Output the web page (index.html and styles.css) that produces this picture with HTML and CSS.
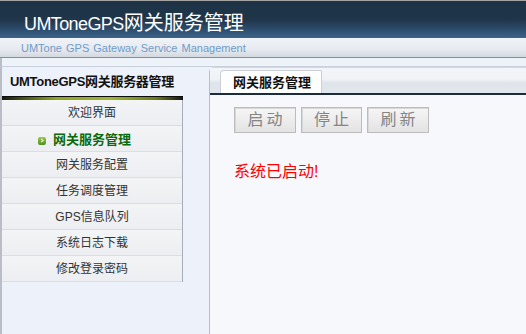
FILE: index.html
```html
<!doctype html>
<html lang="zh">
    <head>
        <meta charset="utf-8">
        <title>UMToneGPS网关服务管理</title>
        <link rel="stylesheet" href="styles.css">
    </head>
    <body>

        <div class="header">
            <div class="header-title"><span class="header-en">UMToneGPS</span>网关服务管理</div>
        </div>
        <div class="subbar">UMTone GPS Gateway Service Management</div>
        <div class="strip"></div>

        <div class="main">

            <div class="side">
                <div class="side-title">UMToneGPS网关服务器管理</div>
                <div class="side-bar"></div>
                <ul class="menu">
                    <li class="menu-item">欢迎界面</li>
                    <li class="menu-item menu-item-active"><span class="menu-icon"></span>网关服务管理</li>
                    <li class="menu-item">网关服务配置</li>
                    <li class="menu-item">任务调度管理</li>
                    <li class="menu-item">GPS信息队列</li>
                    <li class="menu-item">系统日志下载</li>
                    <li class="menu-item">修改登录密码</li>
                </ul>
            </div>

            <div class="panel">
                <div class="tabs">
                    <div class="tab">网关服务管理</div>
                </div>
                <div class="panel-body">
                    <div class="btn-row">
                        <button class="btn">启动</button>
                        <button class="btn">停止</button>
                        <button class="btn">刷新</button>
                    </div>
                    <div class="msg">系统已启动!</div>
                </div>
            </div>

        </div>

    </body>
</html>
```

FILE: styles.css
```css
* {
    box-sizing: border-box;
}

html, body {
    margin: 0;
    padding: 0;
    height: 100%;
}

body {
    font-family: "Liberation Sans", "Noto Sans CJK SC", sans-serif;
    font-size: 12px;
    color: #333;
    background: #edf1f9;
    display: flex;
    flex-direction: column;
    overflow: hidden;
}

/* header */

.header {
    height: 38px;
    border-top: 1px solid #a4a4a4;
    background: linear-gradient(to bottom, #1e3346 0%, #1f3549 50%, #2c4b6b 75%, #3d6489 100%);
    padding: 9px 0 0 24px;
}

.header-title {
    color: #fff;
    font-size: 20px;
    line-height: 26px;
}

.header-en {
    font-size: 18px;
    letter-spacing: -0.6px;
}

.subbar {
    height: 20px;
    background: linear-gradient(to bottom, #f1f3f7 0%, #e6e9ef 60%, #d3d9e1 100%);
    border-bottom: 1px solid #7e8fa6;
    color: #6f9cc8;
    font-size: 11px;
    line-height: 20px;
    padding-left: 21px;
    word-spacing: 1px;
}

.strip {
    height: 9px;
    background: #eef2f9;
    border-bottom: 1px solid #c8d0dc;
    border-left: 2px solid #b9bec6;
}

/* main area */

.main {
    flex: 1;
    display: flex;
    border-left: 2px solid #b9bec6;
}

.side {
    width: 207px;
}

.side-title {
    height: 29px;
    padding-left: 8px;
    font-weight: bold;
    font-size: 13px;
    line-height: 29px;
    color: #111;
    letter-spacing: -0.3px;
}

.side-bar {
    width: 181px;
    height: 4px;
    background: linear-gradient(to right, #141810 0%, #3c4a14 10%, #8fa326 30%, #a2b434 60%, #6b7a1c 85%, #151512 100%);
    border-top: 1px solid #0c0c0c;
}

.menu {
    list-style: none;
    margin: 0;
    padding: 0;
    width: 181px;
    border-right: 1px solid #a5adb9;
}

.menu-item {
    height: 26px;
    line-height: 25px;
    padding-top: 1px;
    text-align: center;
    border-bottom: 1px solid #dadee4;
    background: linear-gradient(to bottom, #f3f4f6, #eceef1);
    color: #333;
    font-size: 12px;
}

.menu-item-active {
    color: #0b6a0b;
    font-weight: bold;
    font-size: 13px;
}

.menu-icon {
    display: inline-block;
    width: 8px;
    height: 8px;
    margin: 0 7px 0 -15px;
    border-radius: 2px;
    background: linear-gradient(to bottom, #9ccc4a, #4f8d1c);
    position: relative;
    vertical-align: -1px;
}

.menu-icon::after {
    content: "";
    position: absolute;
    left: 2px;
    top: 2px;
    width: 2px;
    height: 2px;
    border-right: 1px solid #fff;
    border-bottom: 1px solid #fff;
    transform: rotate(-45deg);
}

/* content panel */

.panel {
    flex: 1;
    display: flex;
    flex-direction: column;
    border-left: 1px solid #b6bfcc;
    border-top: 1px solid #d2d8e2;
    border-top-left-radius: 5px;
    background: #f6f8fb;
}

.tabs {
    height: 27px;
    padding: 3px 0 0 10px;
    background: linear-gradient(to bottom, #f3f5f9 0%, #f0f2f6 45%, #dfe4eb 60%, #e2e7ee 100%);
    border-bottom: 2px solid #1b2c3e;
    display: flex;
    align-items: flex-end;
}

.tab {
    width: 102px;
    height: 23px;
    background: #fff;
    border: 1px solid #c9d0da;
    border-bottom: none;
    border-top-left-radius: 4px;
    border-top-right-radius: 2px;
    font-weight: bold;
    font-size: 13px;
    line-height: 23px;
    padding-left: 12px;
    color: #111;
}

.panel-body {
    flex: 1;
    padding: 12px 0 0 24px;
}

.btn-row {
    display: flex;
    gap: 5px;
}

.btn {
    width: 62px;
    height: 26px;
    border: 1px solid #bcbcbc;
    box-shadow: inset 1px 1px 0 #d8d8d8;
    background: linear-gradient(to bottom, #f6f6f6, #e3e3e3);
    color: #858585;
    font-family: "Liberation Sans", "Noto Sans CJK SC", sans-serif;
    font-size: 16px;
    letter-spacing: 3px;
    padding: 0 0 0 3px;
    line-height: 24px;
}

.btn-row .btn:nth-child(2) {
    width: 61px;
}

.msg {
    margin-top: 29px;
    color: #f00;
    font-size: 16px;
    line-height: 20px;
}
```
